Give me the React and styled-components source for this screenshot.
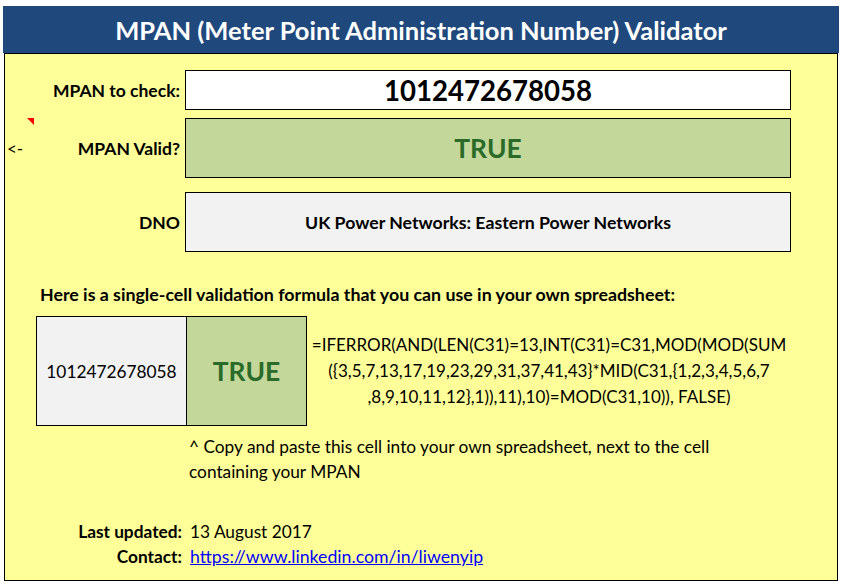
import React from 'react';
import styled, { createGlobalStyle } from 'styled-components';

const Global = createGlobalStyle`
  html, body { margin: 0; padding: 0; background: #fff; }
  body { font-family: Lato, "Open Sans", "Liberation Sans", sans-serif; color: #000; }
  * { box-sizing: border-box; }
`;

const Frame = styled.div`
  margin: 6px 0 0 3px;
  width: 836px;
`;

const TitleBar = styled.h1`
  margin: 0;
  height: 47px;
  background: #1f497d;
  color: #fff;
  font-size: 25.5px;
  font-weight: 700;
  display: flex;
  align-items: center;
  justify-content: center;
`;

const Panel = styled.div`
  margin-left: 1px;
  width: 834px;
  height: 528px;
  background: #ffff99;
  border: 1px solid #000;
  padding-top: 16px;
  display: flex;
  flex-direction: column;
`;

const FieldRow = styled.div`
  display: grid;
  grid-template-columns: 175px 606px;
  column-gap: 5px;
  height: ${p => p.$h}px;
  margin-bottom: ${p => p.$mb || 0}px;
`;

const Label = styled.div`
  position: relative;
  display: flex;
  align-items: center;
  justify-content: flex-end;
  font-weight: 700;
  font-size: 17.5px;
`;

const Arrow = styled.span`
  position: absolute;
  left: 2px;
  top: 50%;
  transform: translateY(-50%);
  font-weight: 400;
  font-size: 17px;
`;

const CommentMark = styled.span`
  position: absolute;
  left: 22px;
  top: 0;
  width: 0;
  height: 0;
  border-top: 7px solid #ff0000;
  border-left: 7px solid transparent;
`;

const ValueBox = styled.div`
  border: 1px solid #000;
  background: ${p => p.$bg};
  display: flex;
  align-items: center;
  justify-content: center;
  font-weight: 700;
  font-size: ${p => p.$fs}px;
  color: ${p => p.$color || '#000'};
`;

const Heading = styled.div`
  margin: 32px 0 0 35px;
  font-weight: 700;
  font-size: 17.8px;
  line-height: 20px;
  white-space: nowrap;
`;

const FormulaRow = styled.div`
  margin: 12px 0 0 31px;
  display: flex;
  align-items: center;
`;

const SampleCell = styled.div`
  width: ${p => p.$w}px;
  height: 110px;
  border: 1px solid #000;
  margin-left: ${p => p.$first ? 0 : -1}px;
  background: ${p => p.$bg};
  display: flex;
  align-items: center;
  justify-content: center;
  font-size: ${p => p.$fs}px;
  font-weight: ${p => p.$bold ? 700 : 400};
  color: ${p => p.$color || '#000'};
`;

const FormulaText = styled.div`
  margin-left: 4px;
  width: 476px;
  text-align: center;
  font-size: 17px;
  line-height: 26px;
  white-space: nowrap;
`;

const Note = styled.div`
  margin: 8px 0 0 184px;
  font-size: 17.3px;
  line-height: 25px;
  white-space: nowrap;
`;

const Footer = styled.div`
  margin-top: 35px;
  display: grid;
  grid-template-columns: 177px auto;
  column-gap: 8px;
  font-size: 17.3px;
  line-height: 25px;
  justify-content: start;
`;

const FootLabel = styled.div`
  font-weight: 700;
  text-align: right;
`;

const Link = styled.a`
  color: #0000ff;
  text-decoration: underline;
  font-size: 17.7px;
`;

export default function App() {
  return (
    <>
      <Global />
      <Frame>
        <TitleBar>MPAN (Meter Point Administration Number) Validator</TitleBar>
        <Panel>
          <FieldRow $h={40} $mb={8}>
            <Label>MPAN to check:</Label>
            <ValueBox $bg="#ffffff" $fs={27.6}>1012472678058</ValueBox>
          </FieldRow>
          <FieldRow $h={60} $mb={14}>
            <Label>
              <CommentMark />
              <Arrow>&lt;-</Arrow>
              MPAN Valid?
            </Label>
            <ValueBox $bg="#c4d79b" $fs={26.4} $color="#2a6b2a">TRUE</ValueBox>
          </FieldRow>
          <FieldRow $h={60}>
            <Label>DNO</Label>
            <ValueBox $bg="#f2f2f2" $fs={17.7}>UK Power Networks: Eastern Power Networks</ValueBox>
          </FieldRow>
          <Heading>Here is a single-cell validation formula that you can use in your own spreadsheet:</Heading>
          <FormulaRow>
            <SampleCell $first $w={151} $bg="#f2f2f2" $fs={17.3}>1012472678058</SampleCell>
            <SampleCell $w={121} $bg="#c4d79b" $fs={26.4} $bold $color="#2a6b2a">TRUE</SampleCell>
            <FormulaText>
              =IFERROR(AND(LEN(C31)=13,INT(C31)=C31,MOD(MOD(SUM<br />
              ({'{'}3,5,7,13,17,19,23,29,31,37,41,43{'}'}*MID(C31,{'{'}1,2,3,4,5,6,7<br />
              ,8,9,10,11,12{'}'},1)),11),10)=MOD(C31,10)), FALSE)
            </FormulaText>
          </FormulaRow>
          <Note>
            ^ Copy and paste this cell into your own spreadsheet, next to the cell<br />
            containing your MPAN
          </Note>
          <Footer>
            <FootLabel>Last updated:</FootLabel>
            <div>13 August 2017</div>
            <FootLabel>Contact:</FootLabel>
            <div><Link href="#">https://www.linkedin.com/in/liwenyip</Link></div>
          </Footer>
        </Panel>
      </Frame>
    </>
  );
}
